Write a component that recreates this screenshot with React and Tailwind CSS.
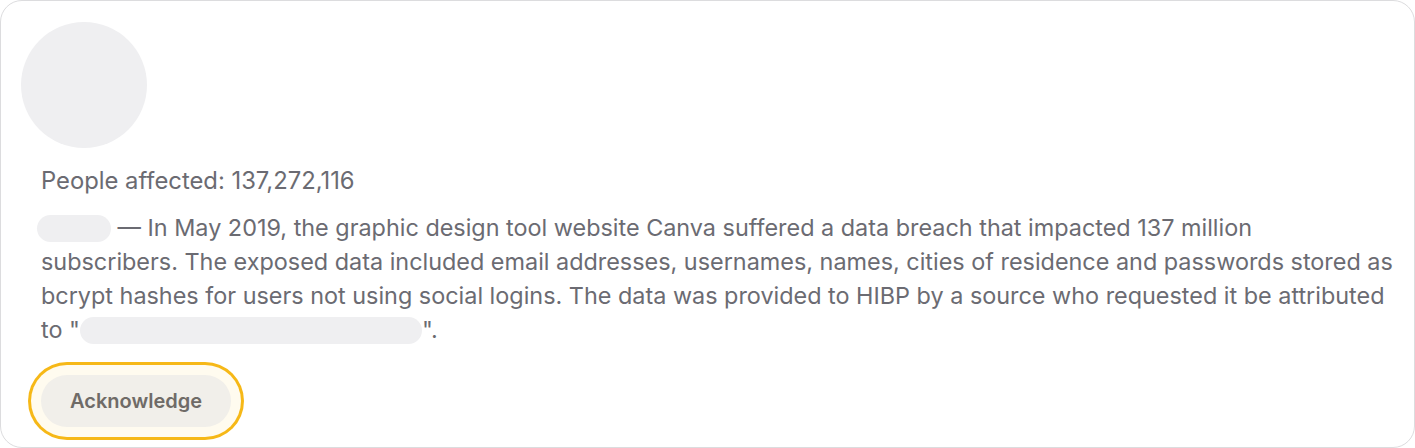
import React from 'react';

const breach = {
  affected: '137,272,116',
  lines: [
    ' — In May 2019, the graphic design tool website Canva suffered a data breach that impacted 137 million',
    'subscribers. The exposed data included email addresses, usernames, names, cities of residence and passwords stored as',
    'bcrypt hashes for users not using social logins. The data was provided to HIBP by a source who requested it be attributed',
    'to "',
  ],
};

function Redacted({ className }) {
  return <span className={`inline-block rounded-full bg-[#efeff1] align-middle ${className}`} />;
}

export default function App() {
  return (
    <div className="w-[1415px] h-[448px] bg-white" style={{ fontFamily: 'Inter, "Liberation Sans", sans-serif' }}>
      <div className="h-[448px] rounded-[22px] border border-[#dcdcde] bg-white p-5 pt-[21px]">
        {/* Avatar placeholder */}
        <div className="w-[126px] h-[126px] rounded-full bg-[#efeff1]" />

        <div className="-mr-2 pl-5 pt-4 text-[23.4px] leading-[34px] text-[#6b6b72]">
          <p className="text-[23.8px]">People affected: {breach.affected}</p>
          <p className="mt-[13px]">
            <Redacted className="-ml-1 w-[74px] h-[27px] -mt-[3px]" />
            {breach.lines[0]}
            <br />
            {breach.lines[1]}
            <br />
            {breach.lines[2]}
            <br />
            {breach.lines[3]}
            <Redacted className="w-[342px] h-[27px] -mt-[3px]" />
            ".
          </p>

          {/* Action */}
          <button className="mt-7 h-[52px] rounded-full bg-[#f1efea] px-[29px] text-[20px] font-semibold text-[#6f6b67] ring-[3px] ring-[#f6b817] ring-offset-[10px] ring-offset-[#fffbef]">
            Acknowledge
          </button>
        </div>
      </div>
    </div>
  );
}
